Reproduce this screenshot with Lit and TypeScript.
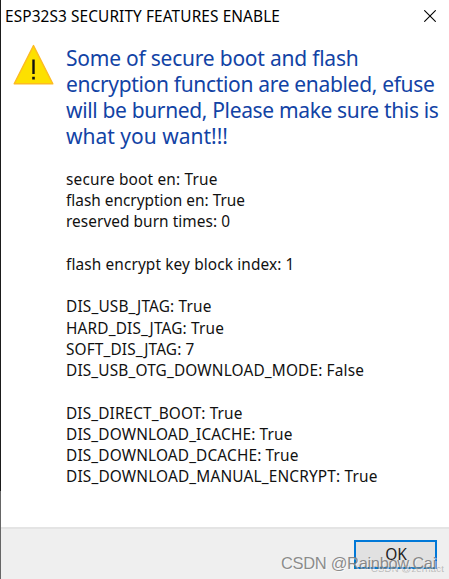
import { LitElement, html, css } from "lit";
import { customElement } from "lit/decorators.js";

type Line = [text: string, width: number];

const TITLE: Line = ["ESP32S3 SECURITY FEATURES ENABLE", 275];

const HEADING: Line[] = [
  ["Some of secure boot and flash", 292.5],
  ["encryption function are enabled, efuse", 368.5],
  ["will be burned, Please make sure this is", 372.5],
  ["what you want!!!", 162],
];

const DETAILS: Line[] = [
  ["secure boot en: True", 151.5],
  ["flash encryption en: True", 179],
  ["reserved burn times: 0", 164],
  ["", 0],
  ["flash encrypt key block index: 1", 228.5],
  ["", 0],
  ["DIS_USB_JTAG: True", 145.5],
  ["HARD_DIS_JTAG: True", 158],
  ["SOFT_DIS_JTAG: 7", 128.5],
  ["DIS_USB_OTG_DOWNLOAD_MODE: False", 298],
  ["", 0],
  ["DIS_DIRECT_BOOT: True", 176.5],
  ["DIS_DOWNLOAD_ICACHE: True", 226.5],
  ["DIS_DOWNLOAD_DCACHE: True", 232.5],
  ["DIS_DOWNLOAD_MANUAL_ENCRYPT: True", 311.5],
];

@customElement("app-root")
export class AppRoot extends LitElement {
  static styles = css`
    :host {
      display: block;
      height: 100vh;
      overflow: hidden;
      background: #fff;
      color: #111;
      font-family: "Noto Sans", "Open Sans", sans-serif;
    }
    .window {
      box-sizing: border-box;
      display: flex;
      height: 100%;
    }
    .edge {
      flex: none;
      width: 1px;
      background: linear-gradient(#1b1b1b 491px, #666 491px);
    }
    .dialog {
      flex: 1;
      min-width: 0;
      display: flex;
      flex-direction: column;
    }
    .titlebar {
      flex: none;
      height: 32px;
      padding: 0 13px 0 4px;
      display: flex;
      align-items: center;
      justify-content: space-between;
      font-size: 15.4px;
      line-height: 31px;
      color: #000;
    }
    .close {
      display: block;
      width: 12px;
      height: 12px;
    }
    .main {
      flex: 1;
      display: flex;
      gap: 12px;
      padding: 13px 0 0 12px;
    }
    .warning {
      flex: none;
      width: 41px;
      height: 42px;
      margin-top: -1px;
    }
    .heading {
      color: #1243a5;
      font-size: 21px;
      line-height: 26.15px;
    }
    .details {
      margin-top: 19.4px;
      font-size: 15.4px;
      line-height: 21.24px;
    }
    .row {
      white-space: pre;
    }
    .row:empty {
      height: 21.24px;
    }
    .fit {
      display: inline-block;
      white-space: pre;
    }
    .footer {
      position: relative;
      flex: none;
      box-sizing: border-box;
      height: 52px;
      border-top: 2px solid #e4e4e4;
      background: #efefef;
      padding: 11px 12px 0 0;
      display: flex;
      justify-content: flex-end;
      align-items: flex-start;
    }
    .ok {
      box-sizing: border-box;
      width: 83px;
      height: 29px;
      padding: 0 0 0 1px;
      border: 2px solid #0078d7;
      border-radius: 0;
      background: #e1e1e1;
      color: #222;
      font: 15.5px/23px "Noto Sans", sans-serif;
    }
    .mark {
      position: absolute;
      white-space: pre;
      font-family: "Liberation Sans", Arial, sans-serif;
    }
    .mark.large {
      left: 280px;
      top: 24px;
      font-size: 16.5px;
      line-height: 20px;
      color: rgba(120, 120, 120, 0.85);
      text-shadow: 1px 1px 0 rgba(255, 255, 255, 0.6);
    }
    .mark.small {
      left: 370px;
      top: 33px;
      font-size: 9.5px;
      line-height: 14px;
      color: rgba(150, 150, 150, 0.6);
    }
  `;

  protected firstUpdated() {
    this.renderRoot.querySelectorAll<HTMLElement>(".fit").forEach((el) => {
      const natural = el.getBoundingClientRect().width;
      const count = (el.textContent ?? "").length;
      const width = Number(el.dataset.width);
      if (count && natural) el.style.letterSpacing = (width - natural) / count + "px";
    });
  }

  private fit([text, width]: Line) {
    return html`<span class="fit" data-width=${width}>${text}</span>`;
  }

  private row(line: Line) {
    return line[0] ? html`<div class="row">${this.fit(line)}</div>` : html`<div class="row"></div>`;
  }

  render() {
    return html`
      <div class="window">
        <div class="edge"></div>
        <div class="dialog">
          <div class="titlebar">
            ${this.fit(TITLE)}
            <svg class="close" viewBox="0 0 12 12">
              <path d="M.3 .3 11.7 11.7M11.7 .3 .3 11.7" stroke="#000" stroke-width="1.1" />
            </svg>
          </div>
          <div class="main">
            <svg class="warning" viewBox="0 0 41 42">
              <path d="M20.5 1.6 39.8 39.8H1.2Z" fill="#fde000" stroke="#fdbb22" stroke-width="1.4" stroke-linejoin="round" />
              <path d="M19.3 15.5h2.4v14.5h-2.4zM19.2 32.8h2.6v2.8h-2.6z" fill="#111" />
            </svg>
            <div>
              <div class="heading">${HEADING.map((l) => this.row(l))}</div>
              <div class="details">${DETAILS.map((l) => this.row(l))}</div>
            </div>
          </div>
          <div class="footer">
            <button class="ok">OK</button>
            <span class="mark small">${this.fit(["CSDN @zerhact", 73])}</span>
            <span class="mark large">${this.fit(["CSDN @Rainbow.Cai", 155])}</span>
          </div>
        </div>
      </div>
    `;
  }
}
